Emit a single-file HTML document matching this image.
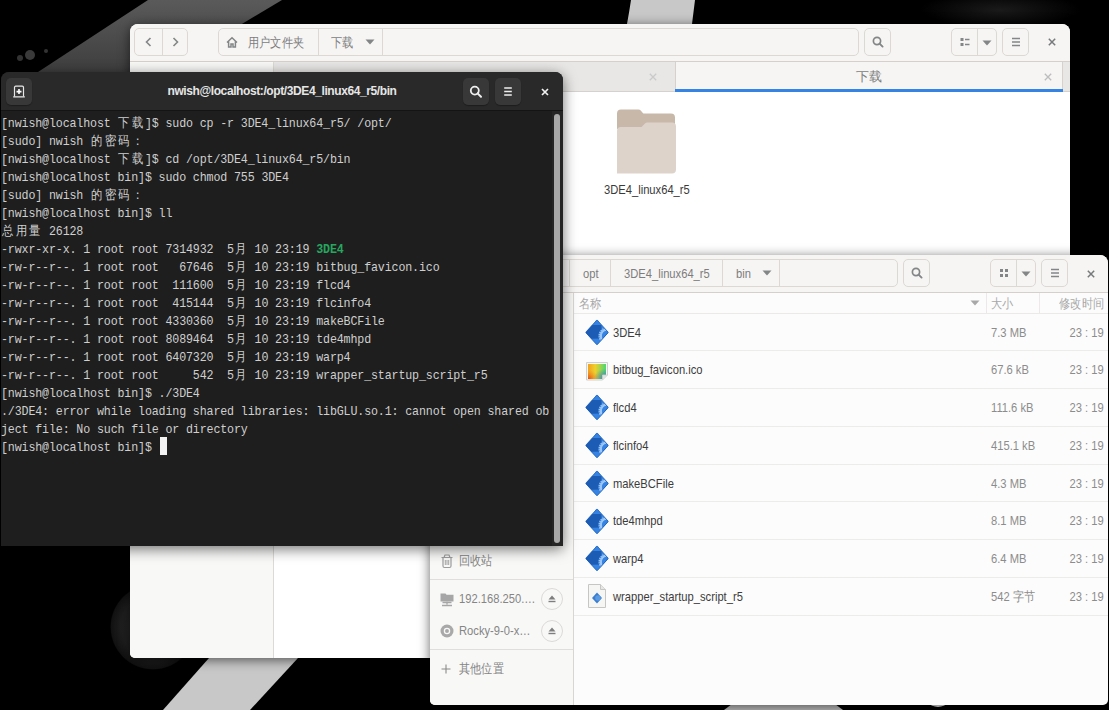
<!DOCTYPE html>
<html><head><meta charset="utf-8">
<style>
*{box-sizing:border-box;margin:0;padding:0}
html,body{width:1109px;height:710px;overflow:hidden;background:#000;font-family:"Liberation Sans",sans-serif}
.abs{position:absolute}
#bg{position:absolute;left:0;top:0}
.fm{position:absolute;background:#fff;overflow:hidden}
.hdr{position:absolute;left:0;top:0;right:0;background:#f6f5f4;border-bottom:1px solid #d5d0cc}
.btn{position:absolute;border:1px solid #dcd8d4;border-radius:5px;background:#f6f5f4}
.sep{position:absolute;top:0;bottom:0;width:1px;background:#dcd8d4}
.lbl{position:absolute;white-space:nowrap;line-height:15px}
#term{position:absolute;left:1px;top:72px;width:562px;height:474px;background:#1e1e1e;border-radius:8px 8px 0 0;overflow:hidden;box-shadow:0 3px 14px rgba(0,0,0,.55)}
#term .th{position:absolute;left:0;top:0;width:562px;height:39px;background:#292929;border-bottom:1px solid #141414}
.tb{position:absolute;top:6px;width:26px;height:27px;background:#383838;border-radius:5px;box-shadow:0 1px 1px rgba(0,0,0,.3)}
.tl{position:absolute;left:0;white-space:pre;font-family:"Liberation Mono",monospace;font-size:11.667px;letter-spacing:-0.1429px;color:#cfcfcf;height:18px;line-height:18px;transform:scaleY(1.15);transform-origin:0 12.1px}
.g{color:#26a65e;font-weight:bold}
.w2{display:inline-block;width:13.714px;text-align:center;letter-spacing:0}
</style></head>
<body>
<svg width="0" height="0" style="position:absolute;left:0;top:0"><defs>


<linearGradient id="gic" x1="0" y1="0" x2="1" y2="0"><stop offset="0" stop-color="#f2a020"/><stop offset=".4" stop-color="#f0d02c"/><stop offset="1" stop-color="#48d870"/></linearGradient><radialGradient id="gic3" cx="1" cy="1" r=".7"><stop offset="0" stop-color="#3070d0" stop-opacity=".9"/><stop offset="1" stop-color="#3070d0" stop-opacity="0"/></radialGradient><radialGradient id="gic2" cx="0" cy="1" r="1"><stop offset="0" stop-color="#e84010" stop-opacity=".9"/><stop offset=".6" stop-color="#f08020" stop-opacity="0"/></radialGradient>
</defs></svg><svg id="bg" width="1109" height="710" viewBox="0 0 1109 710">
  <rect width="1109" height="710" fill="#000"/>
  <defs><linearGradient id="bandg" x1="0" y1="0" x2="0" y2="1"><stop offset="0" stop-color="#5a5a5a"/><stop offset="1" stop-color="#3e3e3e"/></linearGradient></defs><polygon points="148,0 282,0 162,72 38,72" fill="url(#bandg)"/>
  <path d="M631,0 L695,0 C694,8 693,16 692,24 L627,24 C628.5,16 629.8,8 631,0 Z" fill="#c8c8c8"/>
  <polygon points="209,658 298,658 250,710 163,710" fill="#c8c8c8"/>
  <defs><radialGradient id="sph" cx=".5" cy=".5" r=".5"><stop offset="0" stop-color="#2c2c2c"/><stop offset=".75" stop-color="#1e1e1e"/><stop offset=".97" stop-color="#111"/><stop offset="1" stop-color="#000"/></radialGradient>
  <radialGradient id="spk" cx=".5" cy=".5" r=".5"><stop offset="0" stop-color="#1a1a1a"/><stop offset="1" stop-color="#000"/></radialGradient></defs>
  <circle cx="153" cy="627" r="43" fill="url(#sph)"/>
  <ellipse cx="1000" cy="10" rx="80" ry="18" fill="url(#spk)"/>
  <circle cx="30" cy="55" r="5" fill="#3a3a3a"/><circle cx="20" cy="58" r="3" fill="#333"/><circle cx="46" cy="51" r="2" fill="#333"/>
  <polygon points="732,704 835,704 843,710 724,710" fill="#c0c0c0"/>
  <circle cx="938" cy="692" r="15" fill="#f0f0f0"/>
</svg>
<div class="fm" id="fm1" style="left:130px;top:24px;width:940px;height:634px;border-radius:8px 8px 5px 5px;box-shadow:0 2px 12px rgba(0,0,0,.6)">
<div class="hdr" style="height:38px"></div>
<div class="btn" style="left:4px;top:4px;width:54px;height:28px"><div class="sep" style="left:27px"></div><svg class="abs" style="left:7px;top:6px" width="14" height="14" viewBox="0 0 14 14"><path d="M8.5 3L4.5 7l4 4" fill="none" stroke="#838686" stroke-width="1.6"/></svg><svg class="abs" style="left:33px;top:6px" width="14" height="14" viewBox="0 0 14 14"><path d="M5.5 3l4 4-4 4" fill="none" stroke="#838686" stroke-width="1.6"/></svg></div>
<div class="btn" style="left:88px;top:4px;width:641px;height:28px"><div class="sep" style="left:99px"></div><div class="sep" style="left:163px"></div><svg class="abs" style="left:6px;top:6px" width="14" height="14" viewBox="0 0 14 14"><path d="M2 7.5L7 2.8l5 4.7M3.6 6.3V12h2.4V9h2v3h2.4V6.3" fill="none" stroke="#838686" stroke-width="1.5"/></svg>
<div class="lbl" style="left:29.00px;top:6.15px;color:#7d7d7d;font-size:13.00px;transform:scaleX(0.860);transform-origin:left center">用户文件夹</div>
<div class="lbl" style="left:112.00px;top:6.15px;color:#7d7d7d;font-size:13.00px;transform:scaleX(0.860);transform-origin:left center">下载</div>
<svg class="abs" style="left:146.0px;top:9.0px" width="10" height="8" viewBox="0 0 10 8"><path d="M0.5 1.5h9L5 6.5z" fill="#838686"/></svg>
</div>
<div class="btn" style="left:734px;top:4px;width:27px;height:28px"><svg class="abs" style="left:6.0px;top:6.0px" width="14" height="14" viewBox="0 0 14 14"><circle cx="6" cy="6" r="3.6" fill="none" stroke="#838686" stroke-width="1.7"/><path d="M8.6 8.6l3 3" stroke="#838686" stroke-width="1.9" stroke-linecap="round"/></svg></div>
<div class="btn" style="left:821px;top:4px;width:46px;height:28px"><div class="sep" style="left:25px"></div><svg class="abs" style="left:7px;top:7px" width="12" height="12" viewBox="0 0 12 12"><path d="M1.5 2h3v3h-3zM1.5 7h3v3h-3z" fill="#838686"/><path d="M6 3.5h4.5M6 8.5h4.5" stroke="#838686" stroke-width="1.4"/></svg><svg class="abs" style="left:30.0px;top:10.0px" width="10" height="8" viewBox="0 0 10 8"><path d="M0.5 1.5h9L5 6.5z" fill="#838686"/></svg></div>
<div class="btn" style="left:872px;top:4px;width:27px;height:28px"><svg class="abs" style="left:6.0px;top:6.0px" width="14" height="14" viewBox="0 0 14 14"><path d="M3 3.5h8M3 7h8M3 10.5h8" stroke="#838686" stroke-width="1.4"/></svg></div>
<svg class="abs" style="left:915.0px;top:11.0px" width="14" height="14" viewBox="0 0 14 14"><path d="M3.8 3.8l6.4 6.4M10.2 3.8l-6.4 6.4" stroke="#777a7a" stroke-width="1.50"/></svg>
<div class="abs" style="left:0;top:38px;width:144px;height:596px;background:#f8f8f7;border-right:1px solid #dcd9d6"></div>
<div class="abs" style="left:144px;top:38px;width:796px;height:30px;background:#e8e7e6;border-bottom:1px solid #d5d1cd"></div>
<div class="abs" style="left:545px;top:38px;width:388px;height:30px;background:#f6f5f4;border-left:1px solid #d5d1cd;border-right:1px solid #d5d1cd"></div>
<div class="abs" style="left:545px;top:65px;width:388px;height:3px;background:#3584e4"></div>
<div class="lbl" style="left:545px;width:388px;top:45.15px;text-align:center;color:#7d7d7d;font-size:13px">下载</div>
<svg class="abs" style="left:516.0px;top:46.0px" width="14" height="14" viewBox="0 0 14 14"><path d="M3.8 3.8l6.4 6.4M10.2 3.8l-6.4 6.4" stroke="#cacaca" stroke-width="1.30"/></svg>
<svg class="abs" style="left:911.0px;top:46.0px" width="14" height="14" viewBox="0 0 14 14"><path d="M3.8 3.8l6.4 6.4M10.2 3.8l-6.4 6.4" stroke="#bdbdbd" stroke-width="1.30"/></svg>
<svg class="abs" style="left:486px;top:85px" width="61" height="66" viewBox="0 0 61 66"><path d="M1 4.5a4 4 0 0 1 4-4h17.5a3 3 0 0 1 2.2 1l2.6 3h27.7a4 4 0 0 1 4 4V20H1z" fill="#c8b8a9"/><path d="M1 22a4 4 0 0 1 4-4h20.5l3.5-3.5a3 3 0 0 1 2.1-.9H56a4 4 0 0 1 4 4V60.5a4 4 0 0 1-4 4H1z" fill="#ddd3ca"/></svg>
<div class="lbl" style="left:473.80px;top:158.05px;color:#3a3a3a;font-size:13.00px;transform:scaleX(0.860);transform-origin:left center">3DE4_linux64_r5</div>
</div>
<div class="fm" id="fm2" style="left:430px;top:255px;width:678px;height:450px;border-radius:8px 8px 5px 5px;background:#fcfcfc;box-shadow:0 2px 12px rgba(0,0,0,.6)">
<div class="hdr" style="height:38px"></div>
<div class="btn" style="left:40px;top:4px;width:428px;height:28px">
<div class="sep" style="left:98px"></div>
<div class="sep" style="left:139px"></div>
<div class="sep" style="left:251px"></div>
<div class="sep" style="left:308px"></div>
<div class="lbl" style="left:112.00px;top:6.15px;color:#7d7d7d;font-size:13.00px;transform:scaleX(0.860);transform-origin:left center">opt</div>
<div class="lbl" style="left:153.20px;top:6.15px;color:#7d7d7d;font-size:13.00px;transform:scaleX(0.860);transform-origin:left center">3DE4_linux64_r5</div>
<div class="lbl" style="left:265.00px;top:6.15px;color:#7d7d7d;font-size:13.00px;transform:scaleX(0.860);transform-origin:left center">bin</div>
<svg class="abs" style="left:291.0px;top:9.0px" width="10" height="8" viewBox="0 0 10 8"><path d="M0.5 1.5h9L5 6.5z" fill="#838686"/></svg>
</div>
<div class="btn" style="left:473px;top:4px;width:27px;height:28px"><svg class="abs" style="left:6.0px;top:6.0px" width="14" height="14" viewBox="0 0 14 14"><circle cx="6" cy="6" r="3.6" fill="none" stroke="#838686" stroke-width="1.7"/><path d="M8.6 8.6l3 3" stroke="#838686" stroke-width="1.9" stroke-linecap="round"/></svg></div>
<div class="btn" style="left:560px;top:4px;width:46px;height:28px"><div class="sep" style="left:25px"></div><svg class="abs" style="left:7px;top:7px" width="12" height="12" viewBox="0 0 12 12"><path d="M2 2h3v3H2zM7 2h3v3H7zM2 7h3v3H2zM7 7h3v3H7z" fill="#838686"/></svg><svg class="abs" style="left:30.0px;top:10.0px" width="10" height="8" viewBox="0 0 10 8"><path d="M0.5 1.5h9L5 6.5z" fill="#838686"/></svg></div>
<div class="btn" style="left:611px;top:4px;width:27px;height:28px"><svg class="abs" style="left:6.0px;top:6.0px" width="14" height="14" viewBox="0 0 14 14"><path d="M3 3.5h8M3 7h8M3 10.5h8" stroke="#838686" stroke-width="1.4"/></svg></div>
<svg class="abs" style="left:654.0px;top:11.5px" width="14" height="14" viewBox="0 0 14 14"><path d="M3.8 3.8l6.4 6.4M10.2 3.8l-6.4 6.4" stroke="#777a7a" stroke-width="1.50"/></svg>
<div class="abs" style="left:0;top:38px;width:144px;height:412px;background:#f8f8f7;border-right:1px solid #d8d5d2"></div>
<div class="abs" style="left:0;top:323.5px;width:143px;height:1px;background:#e0dedc"></div>
<div class="abs" style="left:0;top:394px;width:143px;height:1px;background:#e0dedc"></div>
<svg class="abs" style="left:9px;top:297.5px" width="16" height="16" viewBox="0 0 16 16"><path d="M2.5 4.5h11M4 4.5v8.5a1.5 1.5 0 0 0 1.5 1.5h5a1.5 1.5 0 0 0 1.5-1.5V4.5M5 4.5l1-2.5h4l1 2.5" fill="none" stroke="#9c9c9c" stroke-width="1.2"/><path d="M6.3 7v5M8 7v5M9.7 7v5" stroke="#9c9c9c" stroke-width="0.9"/></svg>
<div class="lbl" style="left:29.00px;top:298.05px;color:#858585;font-size:13.00px;transform:scaleX(0.860);transform-origin:left center">回收站</div>
<svg class="abs" style="left:9px;top:335.5px" width="16" height="16" viewBox="0 0 16 16"><path d="M1.5 2.5h5l1 1.3h7v6.7h-13z" fill="#a6a6a6"/><path d="M3.5 11.5h9M8 10.5v3M3 14.5h10" stroke="#a6a6a6" stroke-width="1.3"/></svg>
<div class="lbl" style="left:29.00px;top:336.35px;color:#858585;font-size:13.00px;transform:scaleX(0.860);transform-origin:left center">192.168.250.…</div>
<div class="abs" style="left:110.5px;top:332.7px;width:22px;height:22px;border-radius:50%;border:1px solid #dcdad8"></div>
<svg class="abs" style="left:115.5px;top:337.7px" width="12" height="12" viewBox="0 0 12 12"><path d="M6 2.5l3.5 4h-7z" fill="#7e7e7e"/><path d="M2.5 8.5h7" stroke="#7e7e7e" stroke-width="1.4"/></svg>
<svg class="abs" style="left:9px;top:367.5px" width="16" height="16" viewBox="0 0 16 16"><circle cx="8" cy="8" r="6.5" fill="#a9a9a9"/><circle cx="8" cy="8" r="2.6" fill="none" stroke="#f8f8f7" stroke-width="1.3"/></svg>
<div class="lbl" style="left:29.00px;top:368.15px;color:#858585;font-size:13.00px;transform:scaleX(0.860);transform-origin:left center">Rocky-9-0-x…</div>
<div class="abs" style="left:110.5px;top:364.5px;width:22px;height:22px;border-radius:50%;border:1px solid #dcdad8"></div>
<svg class="abs" style="left:115.5px;top:369.5px" width="12" height="12" viewBox="0 0 12 12"><path d="M6 2.5l3.5 4h-7z" fill="#7e7e7e"/><path d="M2.5 8.5h7" stroke="#7e7e7e" stroke-width="1.4"/></svg>
<svg class="abs" style="left:10px;top:407.5px" width="12" height="12" viewBox="0 0 12 12"><path d="M6 1.5v9M1.5 6h9" stroke="#8a8a8a" stroke-width="1.1"/></svg>
<div class="lbl" style="left:29.00px;top:406.45px;color:#858585;font-size:13.00px;transform:scaleX(0.860);transform-origin:left center">其他位置</div>
<div class="abs" style="left:144px;right:0;top:57.5px;height:1px;background:#ebeae9"></div>
<div class="lbl" style="left:149.00px;top:40.85px;color:#a8a8a8;font-size:13.00px;transform:scaleX(0.860);transform-origin:left center">名称</div>
<svg class="abs" style="left:540.0px;top:43.5px" width="10" height="8" viewBox="0 0 10 8"><path d="M0.5 1.5h9L5 6.5z" fill="#a8a8a8"/></svg>
<div class="abs" style="left:555.5px;top:38px;width:1px;height:20px;background:#ebeae9"></div>
<div class="lbl" style="left:560.90px;top:41.15px;color:#a8a8a8;font-size:13.00px;transform:scaleX(0.860);transform-origin:left center">大小</div>
<div class="abs" style="left:609px;top:38px;width:1px;height:20px;background:#ebeae9"></div>
<div class="lbl" style="right:4.20px;top:41.15px;color:#a8a8a8;font-size:13.00px;transform:scaleX(0.860);transform-origin:right center">修改时间</div>
<svg class="abs" style="left:155px;top:63.9px" width="24" height="26" viewBox="0 0 24 26"><defs><clipPath id="dclip0"><path d="M11.6 1.3Q12 0.9 12.4 1.3L22.9 12.9Q23.3 13.4 22.9 13.9L12.4 25.5Q12 25.9 11.6 25.5L1.1 13.9Q0.7 13.4 1.1 12.9Z"/></clipPath></defs><g clip-path="url(#dclip0)"><rect width="24" height="26" fill="#3584e4"/><path d="M-1 6H16.5V19.5L-1 20z" fill="#1d5cb4"/><circle cx="22.5" cy="17" r="9" fill="#3584e4"/><circle cx="22.5" cy="17" r="8.2" fill="none" stroke="#9cc6f4" stroke-width="1.6" stroke-dasharray="1.2 1"/><circle cx="22.5" cy="17" r="6.6" fill="none" stroke="#9cc6f4" stroke-width="2.4"/><circle cx="22.5" cy="17" r="5.5" fill="#3584e4"/></g><path d="M11.6 1.3Q12 0.9 12.4 1.3L22.9 12.9Q23.3 13.4 22.9 13.9L12.4 25.5Q12 25.9 11.6 25.5L1.1 13.9Q0.7 13.4 1.1 12.9Z" fill="none" stroke="#1b5cb5" stroke-width="0.8"/></svg>
<div class="lbl" style="left:183.00px;top:69.53px;color:#3c3c3c;font-size:13.00px;transform:scaleX(0.860);transform-origin:left center">3DE4</div>
<div class="lbl" style="left:561.20px;top:69.53px;color:#8c8c8c;font-size:13.00px;transform:scaleX(0.860);transform-origin:left center">7.3 MB</div>
<div class="lbl" style="right:4.50px;top:69.53px;color:#8c8c8c;font-size:13.00px;transform:scaleX(0.860);transform-origin:right center">23 : 19</div>
<div class="abs" style="left:144px;right:0;top:95.25px;height:1px;background:#ececeb"></div>
<svg class="abs" style="left:154.5px;top:105.9px" width="24" height="20" viewBox="0 0 24 20"><path d="M1.5 1.5h21v12.5l-5 5h-16z" fill="#f6f6f4" stroke="#cfcfcd" stroke-width="1"/><path d="M3 3h18v11.5l-3.5 3.5H3z" fill="url(#gic)"/><path d="M3 3h18v11.5l-3.5 3.5H3z" fill="url(#gic2)"/><path d="M3 3h18v11.5l-3.5 3.5H3z" fill="url(#gic3)"/><path d="M22.5 14h-5v5" fill="#e2e2e0" stroke="#cfcfcd" stroke-width="0.8"/></svg>
<div class="lbl" style="left:183.00px;top:107.28px;color:#3c3c3c;font-size:13.00px;transform:scaleX(0.860);transform-origin:left center">bitbug_favicon.ico</div>
<div class="lbl" style="left:561.20px;top:107.28px;color:#8c8c8c;font-size:13.00px;transform:scaleX(0.860);transform-origin:left center">67.6 kB</div>
<div class="lbl" style="right:4.50px;top:107.28px;color:#8c8c8c;font-size:13.00px;transform:scaleX(0.860);transform-origin:right center">23 : 19</div>
<div class="abs" style="left:144px;right:0;top:133.00px;height:1px;background:#ececeb"></div>
<svg class="abs" style="left:155px;top:139.4px" width="24" height="26" viewBox="0 0 24 26"><defs><clipPath id="dclip2"><path d="M11.6 1.3Q12 0.9 12.4 1.3L22.9 12.9Q23.3 13.4 22.9 13.9L12.4 25.5Q12 25.9 11.6 25.5L1.1 13.9Q0.7 13.4 1.1 12.9Z"/></clipPath></defs><g clip-path="url(#dclip2)"><rect width="24" height="26" fill="#3584e4"/><path d="M-1 6H16.5V19.5L-1 20z" fill="#1d5cb4"/><circle cx="22.5" cy="17" r="9" fill="#3584e4"/><circle cx="22.5" cy="17" r="8.2" fill="none" stroke="#9cc6f4" stroke-width="1.6" stroke-dasharray="1.2 1"/><circle cx="22.5" cy="17" r="6.6" fill="none" stroke="#9cc6f4" stroke-width="2.4"/><circle cx="22.5" cy="17" r="5.5" fill="#3584e4"/></g><path d="M11.6 1.3Q12 0.9 12.4 1.3L22.9 12.9Q23.3 13.4 22.9 13.9L12.4 25.5Q12 25.9 11.6 25.5L1.1 13.9Q0.7 13.4 1.1 12.9Z" fill="none" stroke="#1b5cb5" stroke-width="0.8"/></svg>
<div class="lbl" style="left:183.00px;top:145.03px;color:#3c3c3c;font-size:13.00px;transform:scaleX(0.860);transform-origin:left center">flcd4</div>
<div class="lbl" style="left:561.20px;top:145.03px;color:#8c8c8c;font-size:13.00px;transform:scaleX(0.860);transform-origin:left center">111.6 kB</div>
<div class="lbl" style="right:4.50px;top:145.03px;color:#8c8c8c;font-size:13.00px;transform:scaleX(0.860);transform-origin:right center">23 : 19</div>
<div class="abs" style="left:144px;right:0;top:170.75px;height:1px;background:#ececeb"></div>
<svg class="abs" style="left:155px;top:177.1px" width="24" height="26" viewBox="0 0 24 26"><defs><clipPath id="dclip3"><path d="M11.6 1.3Q12 0.9 12.4 1.3L22.9 12.9Q23.3 13.4 22.9 13.9L12.4 25.5Q12 25.9 11.6 25.5L1.1 13.9Q0.7 13.4 1.1 12.9Z"/></clipPath></defs><g clip-path="url(#dclip3)"><rect width="24" height="26" fill="#3584e4"/><path d="M-1 6H16.5V19.5L-1 20z" fill="#1d5cb4"/><circle cx="22.5" cy="17" r="9" fill="#3584e4"/><circle cx="22.5" cy="17" r="8.2" fill="none" stroke="#9cc6f4" stroke-width="1.6" stroke-dasharray="1.2 1"/><circle cx="22.5" cy="17" r="6.6" fill="none" stroke="#9cc6f4" stroke-width="2.4"/><circle cx="22.5" cy="17" r="5.5" fill="#3584e4"/></g><path d="M11.6 1.3Q12 0.9 12.4 1.3L22.9 12.9Q23.3 13.4 22.9 13.9L12.4 25.5Q12 25.9 11.6 25.5L1.1 13.9Q0.7 13.4 1.1 12.9Z" fill="none" stroke="#1b5cb5" stroke-width="0.8"/></svg>
<div class="lbl" style="left:183.00px;top:182.78px;color:#3c3c3c;font-size:13.00px;transform:scaleX(0.860);transform-origin:left center">flcinfo4</div>
<div class="lbl" style="left:561.20px;top:182.78px;color:#8c8c8c;font-size:13.00px;transform:scaleX(0.860);transform-origin:left center">415.1 kB</div>
<div class="lbl" style="right:4.50px;top:182.78px;color:#8c8c8c;font-size:13.00px;transform:scaleX(0.860);transform-origin:right center">23 : 19</div>
<div class="abs" style="left:144px;right:0;top:208.50px;height:1px;background:#ececeb"></div>
<svg class="abs" style="left:155px;top:214.9px" width="24" height="26" viewBox="0 0 24 26"><defs><clipPath id="dclip4"><path d="M11.6 1.3Q12 0.9 12.4 1.3L22.9 12.9Q23.3 13.4 22.9 13.9L12.4 25.5Q12 25.9 11.6 25.5L1.1 13.9Q0.7 13.4 1.1 12.9Z"/></clipPath></defs><g clip-path="url(#dclip4)"><rect width="24" height="26" fill="#3584e4"/><path d="M-1 6H16.5V19.5L-1 20z" fill="#1d5cb4"/><circle cx="22.5" cy="17" r="9" fill="#3584e4"/><circle cx="22.5" cy="17" r="8.2" fill="none" stroke="#9cc6f4" stroke-width="1.6" stroke-dasharray="1.2 1"/><circle cx="22.5" cy="17" r="6.6" fill="none" stroke="#9cc6f4" stroke-width="2.4"/><circle cx="22.5" cy="17" r="5.5" fill="#3584e4"/></g><path d="M11.6 1.3Q12 0.9 12.4 1.3L22.9 12.9Q23.3 13.4 22.9 13.9L12.4 25.5Q12 25.9 11.6 25.5L1.1 13.9Q0.7 13.4 1.1 12.9Z" fill="none" stroke="#1b5cb5" stroke-width="0.8"/></svg>
<div class="lbl" style="left:183.00px;top:220.53px;color:#3c3c3c;font-size:13.00px;transform:scaleX(0.860);transform-origin:left center">makeBCFile</div>
<div class="lbl" style="left:561.20px;top:220.53px;color:#8c8c8c;font-size:13.00px;transform:scaleX(0.860);transform-origin:left center">4.3 MB</div>
<div class="lbl" style="right:4.50px;top:220.53px;color:#8c8c8c;font-size:13.00px;transform:scaleX(0.860);transform-origin:right center">23 : 19</div>
<div class="abs" style="left:144px;right:0;top:246.25px;height:1px;background:#ececeb"></div>
<svg class="abs" style="left:155px;top:252.6px" width="24" height="26" viewBox="0 0 24 26"><defs><clipPath id="dclip5"><path d="M11.6 1.3Q12 0.9 12.4 1.3L22.9 12.9Q23.3 13.4 22.9 13.9L12.4 25.5Q12 25.9 11.6 25.5L1.1 13.9Q0.7 13.4 1.1 12.9Z"/></clipPath></defs><g clip-path="url(#dclip5)"><rect width="24" height="26" fill="#3584e4"/><path d="M-1 6H16.5V19.5L-1 20z" fill="#1d5cb4"/><circle cx="22.5" cy="17" r="9" fill="#3584e4"/><circle cx="22.5" cy="17" r="8.2" fill="none" stroke="#9cc6f4" stroke-width="1.6" stroke-dasharray="1.2 1"/><circle cx="22.5" cy="17" r="6.6" fill="none" stroke="#9cc6f4" stroke-width="2.4"/><circle cx="22.5" cy="17" r="5.5" fill="#3584e4"/></g><path d="M11.6 1.3Q12 0.9 12.4 1.3L22.9 12.9Q23.3 13.4 22.9 13.9L12.4 25.5Q12 25.9 11.6 25.5L1.1 13.9Q0.7 13.4 1.1 12.9Z" fill="none" stroke="#1b5cb5" stroke-width="0.8"/></svg>
<div class="lbl" style="left:183.00px;top:258.27px;color:#3c3c3c;font-size:13.00px;transform:scaleX(0.860);transform-origin:left center">tde4mhpd</div>
<div class="lbl" style="left:561.20px;top:258.27px;color:#8c8c8c;font-size:13.00px;transform:scaleX(0.860);transform-origin:left center">8.1 MB</div>
<div class="lbl" style="right:4.50px;top:258.27px;color:#8c8c8c;font-size:13.00px;transform:scaleX(0.860);transform-origin:right center">23 : 19</div>
<div class="abs" style="left:144px;right:0;top:284.00px;height:1px;background:#ececeb"></div>
<svg class="abs" style="left:155px;top:290.4px" width="24" height="26" viewBox="0 0 24 26"><defs><clipPath id="dclip6"><path d="M11.6 1.3Q12 0.9 12.4 1.3L22.9 12.9Q23.3 13.4 22.9 13.9L12.4 25.5Q12 25.9 11.6 25.5L1.1 13.9Q0.7 13.4 1.1 12.9Z"/></clipPath></defs><g clip-path="url(#dclip6)"><rect width="24" height="26" fill="#3584e4"/><path d="M-1 6H16.5V19.5L-1 20z" fill="#1d5cb4"/><circle cx="22.5" cy="17" r="9" fill="#3584e4"/><circle cx="22.5" cy="17" r="8.2" fill="none" stroke="#9cc6f4" stroke-width="1.6" stroke-dasharray="1.2 1"/><circle cx="22.5" cy="17" r="6.6" fill="none" stroke="#9cc6f4" stroke-width="2.4"/><circle cx="22.5" cy="17" r="5.5" fill="#3584e4"/></g><path d="M11.6 1.3Q12 0.9 12.4 1.3L22.9 12.9Q23.3 13.4 22.9 13.9L12.4 25.5Q12 25.9 11.6 25.5L1.1 13.9Q0.7 13.4 1.1 12.9Z" fill="none" stroke="#1b5cb5" stroke-width="0.8"/></svg>
<div class="lbl" style="left:183.00px;top:296.02px;color:#3c3c3c;font-size:13.00px;transform:scaleX(0.860);transform-origin:left center">warp4</div>
<div class="lbl" style="left:561.20px;top:296.02px;color:#8c8c8c;font-size:13.00px;transform:scaleX(0.860);transform-origin:left center">6.4 MB</div>
<div class="lbl" style="right:4.50px;top:296.02px;color:#8c8c8c;font-size:13.00px;transform:scaleX(0.860);transform-origin:right center">23 : 19</div>
<div class="abs" style="left:144px;right:0;top:321.75px;height:1px;background:#ececeb"></div>
<svg class="abs" style="left:157px;top:328.1px" width="20" height="26" viewBox="0 0 20 26"><path d="M1.5 1.5h12l5 5v18h-17z" fill="#f6f6f4" stroke="#c6c6c4" stroke-width="1"/><path d="M13.5 1.5v5h5" fill="#e6e6e4" stroke="#c6c6c4" stroke-width="1"/><path d="M10 9.5l5 5.5-5 5.5-5-5.5z" fill="#3a7cd0"/><circle cx="11" cy="15" r="2.8" fill="#5b9be4"/></svg>
<div class="lbl" style="left:183.00px;top:333.77px;color:#3c3c3c;font-size:13.00px;transform:scaleX(0.860);transform-origin:left center">wrapper_startup_script_r5</div>
<div class="lbl" style="left:561.20px;top:333.77px;color:#8c8c8c;font-size:13.00px;transform:scaleX(0.860);transform-origin:left center">542 字节</div>
<div class="lbl" style="right:4.50px;top:333.77px;color:#8c8c8c;font-size:13.00px;transform:scaleX(0.860);transform-origin:right center">23 : 19</div>
<div class="abs" style="left:144px;right:0;top:359.50px;height:1px;background:#ececeb"></div>
</div>
<div id="term"><div class="th">
<div class="tb" style="left:5px"><svg width="26" height="27" viewBox="0 0 26 27"><path d="M8.5 18.6V9.4a1.2 1.2 0 0 1 1.2-1.2h6.6a1.2 1.2 0 0 1 1.2 1.2v9.2" fill="none" stroke="#e8e8e8" stroke-width="1.2"/><path d="M7.2 18.9h11.6" stroke="#e8e8e8" stroke-width="1.3"/><path d="M13 11.1v5M10.5 13.6h5" stroke="#fff" stroke-width="1.6"/></svg></div>
<div id="ttitle" style="position:absolute;left:0;width:562px;top:11px;text-align:center;color:#e6e6e6;font-weight:bold;font-size:12px;letter-spacing:-0.4px;line-height:17px">nwish@localhost:/opt/3DE4_linux64_r5/bin</div>
<div class="tb" style="left:462px"><svg width="26" height="27" viewBox="0 0 26 27"><circle cx="11.8" cy="12.6" r="4" fill="none" stroke="#eee" stroke-width="1.8"/><path d="M14.6 15.4l3.4 3.4" stroke="#eee" stroke-width="2" stroke-linecap="round"/></svg></div>
<div class="tb" style="left:494px"><svg width="26" height="27" viewBox="0 0 26 27"><path d="M9.2 10h7.6M9.2 13.5h7.6M9.2 17h7.6" stroke="#eee" stroke-width="1.7"/></svg></div>
<svg style="position:absolute;left:536px;top:11.5px" width="16" height="16" viewBox="0 0 16 16"><path d="M5 5l6 6M11 5l-6 6" stroke="#f0f0f0" stroke-width="1.7"/></svg>
</div>
<div class="tl" style="top:43.3px">[nwish@localhost <span class="w2">下</span><span class="w2">载</span>]$ sudo cp -r 3DE4_linux64_r5/ /opt/</div>
<div class="tl" style="top:61.3px">[sudo] nwish <span class="w2">的</span><span class="w2">密</span><span class="w2">码</span><span class="w2">：</span></div>
<div class="tl" style="top:79.3px">[nwish@localhost <span class="w2">下</span><span class="w2">载</span>]$ cd /opt/3DE4_linux64_r5/bin</div>
<div class="tl" style="top:97.3px">[nwish@localhost bin]$ sudo chmod 755 3DE4</div>
<div class="tl" style="top:115.3px">[sudo] nwish <span class="w2">的</span><span class="w2">密</span><span class="w2">码</span><span class="w2">：</span></div>
<div class="tl" style="top:133.3px">[nwish@localhost bin]$ ll</div>
<div class="tl" style="top:151.3px"><span class="w2">总</span><span class="w2">用</span><span class="w2">量</span> 26128</div>
<div class="tl" style="top:169.3px">-rwxr-xr-x. 1 root root 7314932  5<span class="w2">月</span> 10 23:19 <b class="g">3DE4</b></div>
<div class="tl" style="top:187.3px">-rw-r--r--. 1 root root   67646  5<span class="w2">月</span> 10 23:19 bitbug_favicon.ico</div>
<div class="tl" style="top:205.3px">-rw-r--r--. 1 root root  111600  5<span class="w2">月</span> 10 23:19 flcd4</div>
<div class="tl" style="top:223.3px">-rw-r--r--. 1 root root  415144  5<span class="w2">月</span> 10 23:19 flcinfo4</div>
<div class="tl" style="top:241.3px">-rw-r--r--. 1 root root 4330360  5<span class="w2">月</span> 10 23:19 makeBCFile</div>
<div class="tl" style="top:259.3px">-rw-r--r--. 1 root root 8089464  5<span class="w2">月</span> 10 23:19 tde4mhpd</div>
<div class="tl" style="top:277.3px">-rw-r--r--. 1 root root 6407320  5<span class="w2">月</span> 10 23:19 warp4</div>
<div class="tl" style="top:295.3px">-rw-r--r--. 1 root root     542  5<span class="w2">月</span> 10 23:19 wrapper_startup_script_r5</div>
<div class="tl" style="top:313.3px">[nwish@localhost bin]$ ./3DE4</div>
<div class="tl" style="top:331.3px">./3DE4: error while loading shared libraries: libGLU.so.1: cannot open shared ob</div>
<div class="tl" style="top:349.3px">ject file: No such file or directory</div>
<div class="tl" style="top:367.3px">[nwish@localhost bin]$ </div>
<div style="position:absolute;left:158.5px;top:364.5px;width:7px;height:18.3px;background:#f2f2f2"></div>
<div style="position:absolute;left:551px;top:39px;width:11px;height:435px;background:#252525"></div>
<div style="position:absolute;left:553px;top:42px;width:6px;height:429px;border-radius:3px;background:#a8a8a8"></div>
</div>
</body></html>
